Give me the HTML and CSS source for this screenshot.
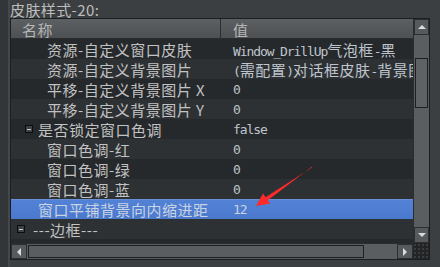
FILE: index.html
```html
<!DOCTYPE html>
<html lang="zh">
<head>
  <meta charset="UTF-8" />
  <title>皮肤样式-20</title>
  <link rel="stylesheet" href="styles.css">
</head>
<body>
  <div class="title">皮肤样式-20:</div>
  <div class="tree">
    <div class="view">
      <div class="head">
        <div class="c-name">名称</div>
        <div class="c-val">值</div>
      </div>
      <div class="row">
        <div class="c-name lv2">资源-自定义窗口皮肤</div>
        <div class="c-val">Window_DrillUp<span class="cjk">气泡框</span>-<span class="cjk">黑</span></div>
      </div>
      <div class="row">
        <div class="c-name lv2">资源-自定义背景图片</div>
        <div class="c-val">(<span class="cjk">需配置</span>)<span class="cjk">对话框皮肤</span>-<span class="cjk">背景图</span></div>
      </div>
      <div class="row">
        <div class="c-name lv2">平移-自定义背景图片 X</div>
        <div class="c-val">0</div>
      </div>
      <div class="row">
        <div class="c-name lv2">平移-自定义背景图片 Y</div>
        <div class="c-val">0</div>
      </div>
      <div class="row">
        <div class="c-name lv1"><span class="exp"></span>是否锁定窗口色调</div>
        <div class="c-val">false</div>
      </div>
      <div class="row">
        <div class="c-name lv2">窗口色调-红</div>
        <div class="c-val">0</div>
      </div>
      <div class="row">
        <div class="c-name lv2">窗口色调-绿</div>
        <div class="c-val">0</div>
      </div>
      <div class="row">
        <div class="c-name lv2">窗口色调-蓝</div>
        <div class="c-val">0</div>
      </div>
      <div class="row selected">
        <div class="c-name lv1b">窗口平铺背景向内缩进距</div>
        <div class="c-val">12</div>
      </div>
      <div class="row">
        <div class="c-name lv0"><span class="exp"></span>---边框---</div>
        <div class="c-val"></div>
      </div>
    </div>
    <div class="vscroll">
      <div class="btn up"></div>
      <div class="track"><div class="thumb"></div></div>
      <div class="btn down"></div>
    </div>
    <div class="hscroll">
      <div class="btn left"></div>
      <div class="track"><div class="thumb"></div></div>
      <div class="btn right"></div>
    </div>
    <div class="corner"></div>
  </div>

  <svg class="arrow" width="440" height="267" viewBox="0 0 440 267">
    <polygon points="256,206 263,193.5 265.6,197.2 312.3,167.3 311.8,166.7 267.8,200.2 270.3,203.6" fill="#ff2b2b"/>
  </svg>
</body>
</html>
```

FILE: styles.css
```css
body {
  margin: 0;
  width: 440px;
  height: 267px;
  overflow: hidden;
  background: linear-gradient(to right, #333638 0 8px, #45484b 8px 10px, #3c3f41 10px);
  font-family: "Noto Sans CJK SC", sans-serif;
  font-size: 15px;
  color: #c2c2c2;
  position: relative;
}
.title {
  height: 17px;
  line-height: 17px;
  padding-top: 1px;
  padding-left: 10px;
  letter-spacing: 0.4px;
  color: #bdbdbd;
}
.tree {
  margin-left: 10px;
  width: 420px;
  height: 242px;
  box-sizing: border-box;
  border: 1px solid #1d1e20;
  display: grid;
  grid-template-columns: 402px 16px;
  grid-template-rows: 224px 16px;
  background: #26292c;
}
.view {
  overflow: hidden;
}
.head, .row {
  display: flex;
  height: 20px;
  line-height: 20px;
  white-space: nowrap;
}
.head {
  background: linear-gradient(#5c6063, #4c5053);
  color: #b6b6b6;
  box-shadow: inset 0 -1px 0 #2a2c2e;
}
.c-name {
  width: 210px;
  flex: none;
  overflow: hidden;
  display: flex;
  align-items: center;
  letter-spacing: 0.5px;
  padding-top: 2px;
  box-sizing: border-box;
}
.c-val {
  flex: 1;
  padding-left: 12px;
  overflow: hidden;
  font-family: "DejaVu Sans Mono", monospace;
  font-size: 13px;
  letter-spacing: -1.1px;
  color: #bfc5cc;
  padding-top: 1px;
}
.c-val .cjk {
  font-family: "Noto Sans CJK SC", sans-serif;
  font-size: 15px;
  letter-spacing: 0.5px;
}
.head .c-name {
  padding-left: 11px;
  border-right: 1px solid #2a2c2e;
}
.head .c-val {
  font-family: "Noto Sans CJK SC", sans-serif;
  font-size: 15px;
  color: #b6b6b6;
  letter-spacing: 0;
}
.row:nth-child(even) { background: #26292c; }
.row:nth-child(odd) { background: #2e3134; }
.row.selected {
  background: linear-gradient(#6a90d8 0 1px, #5282d6 1px, #4a78cc);
  color: #c9d3e2;
}
.row.selected .c-val { color: #c9d3e2; }
.lv2 { padding-left: 36px; }
.lv1 { padding-left: 14px; }
.lv1b { padding-left: 27px; }
.lv0 { padding-left: 6px; }
.exp {
  width: 8px;
  height: 8px;
  box-sizing: border-box;
  border: 1px solid #0c0c0c;
  background: linear-gradient(#c8c8c8, #c8c8c8) center / 4px 1px no-repeat, #3f4245;
  margin-right: 5px;
  margin-top: -2px;
  flex: none;
}
.lv0 .exp { margin-right: 8px; }

.vscroll, .hscroll {
  display: flex;
  background: #5a5e61;
}
.vscroll {
  flex-direction: column;
  border-left: 1px solid #2a2c2e;
}
.hscroll {
  border-top: 1px solid #2a2c2e;
}
.btn {
  flex: none;
  width: 15px;
  height: 15px;
  background: #565a5d;
  display: flex;
  align-items: center;
  justify-content: center;
  box-shadow: inset 0 0 0 1px #2c2e30;
}
.vscroll .btn { width: 15px; height: 16px; }
.hscroll .btn { width: 16px; height: 15px; }
.btn::after {
  content: "";
  border: 4px solid transparent;
}
.up::after { border-bottom: 4px solid #dcdcdc; border-top-width: 0; }
.down::after { border-top: 4px solid #dcdcdc; border-bottom-width: 0; }
.left::after { border-right: 4px solid #dcdcdc; border-left-width: 0; }
.right::after { border-left: 4px solid #dcdcdc; border-right-width: 0; }
.track {
  flex: 1;
  display: flex;
}
.vscroll .track { flex-direction: column; }
.vscroll .thumb {
  margin-top: 23px;
  margin-left: 1px;
  width: 13px;
  height: 50px;
  box-sizing: border-box;
  border: 1px solid #1e1f21;
  background: #5e6265;
}
.hscroll .thumb {
  margin-left: 1px;
  margin-top: 1px;
  width: 336px;
  height: 13px;
  box-sizing: border-box;
  border: 1px solid #1e1f21;
  background: #5a5e61;
}
.corner {
  background: radial-gradient(circle, #3b3e40 0.7px, transparent 1px) 0 0 / 4px 4px, #222426;
}
.arrow {
  position: absolute;
  left: 0;
  top: 0;
}
```
